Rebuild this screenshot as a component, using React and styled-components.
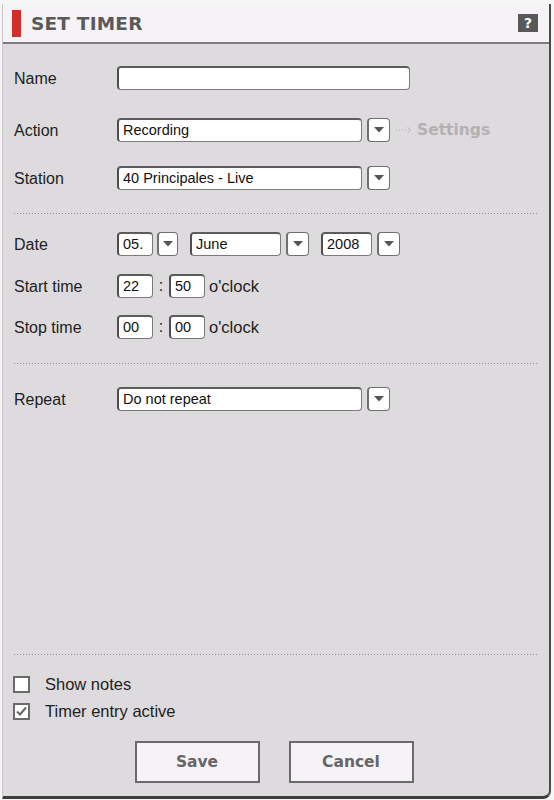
import React from "react";
import styled, { createGlobalStyle } from "styled-components";

const GlobalStyle = createGlobalStyle`
  body {
    margin: 0;
    background: #f7f6f7;
    font-family: "Liberation Sans", Arial, sans-serif;
  }
`;

function App() {
  return (
    <>
      <GlobalStyle />
      <Window>
        <Header>
          <RedBar />
          <Title>SET TIMER</Title>
          <HelpButton>?</HelpButton>
        </Header>
        <Body>
          <Row gap={28}>
            <Label>Name</Label>
            <Field>
              <Input width={293} />
            </Field>
          </Row>
          <Row gap={24}>
            <Label>Action</Label>
            <Field>
              <Input width={245}>Recording</Input>
              <DropButton />
              <SettingsLink>
                <svg width="17" height="8" viewBox="0 0 17 8">
                  <g fill="#b3b1b3">
                    <rect x="0" y="3.5" width="1" height="1" />
                    <rect x="3" y="3.5" width="1" height="1" />
                    <rect x="6" y="3.5" width="1" height="1" />
                    <rect x="9" y="3.5" width="1" height="1" />
                  </g>
                  <path d="M11.5 1 L14.5 4 L11.5 7" fill="none" stroke="#b3b1b3" strokeWidth="1" />
                </svg>
                Settings
              </SettingsLink>
            </Field>
          </Row>
          <Row gap={23}>
            <Label>Station</Label>
            <Field>
              <Input width={245}>40 Principales - Live</Input>
              <DropButton />
            </Field>
          </Row>
          <Divider after={18} />
          <Row gap={18}>
            <Label>Date</Label>
            <Field>
              <Input width={36}>05.</Input>
              <DropButton narrow />
              <Spacer />
              <Input width={91}>June</Input>
              <DropButton />
              <Spacer />
              <Input width={51}>2008</Input>
              <DropButton />
            </Field>
          </Row>
          <Row gap={17}>
            <Label>Start time</Label>
            <Field>
              <Input width={36}>22</Input>
              <Colon>:</Colon>
              <Input width={36}>50</Input>
              <Unit>o'clock</Unit>
            </Field>
          </Row>
          <Row gap={24}>
            <Label>Stop time</Label>
            <Field>
              <Input width={36}>00</Input>
              <Colon>:</Colon>
              <Input width={36}>00</Input>
              <Unit>o'clock</Unit>
            </Field>
          </Row>
          <Divider after={23} />
          <Row gap={0}>
            <Label>Repeat</Label>
            <Field>
              <Input width={245}>Do not repeat</Input>
              <DropButton />
            </Field>
          </Row>

          <Footer>
            <Divider after={21} />
            <CheckRow>
              <CheckBox />
              <CheckLabel>Show notes</CheckLabel>
            </CheckRow>
            <CheckRow>
              <CheckBox>
                <svg width="13" height="13" viewBox="0 0 13 13">
                  <path d="M2 6.5 L5 9.5 L11 2.5" fill="none" stroke="#666" strokeWidth="2" />
                </svg>
              </CheckBox>
              <CheckLabel>Timer entry active</CheckLabel>
            </CheckRow>
            <Buttons>
              <Button>Save</Button>
              <Button>Cancel</Button>
            </Buttons>
          </Footer>
        </Body>
      </Window>
    </>
  );
}

function DropButton({ narrow }) {
  return (
    <Drop narrow={narrow}>
      <svg width="10" height="6" viewBox="0 0 10 6">
        <path d="M0 0 L10 0 L5 5.5 Z" fill="#555" />
      </svg>
    </Drop>
  );
}

const Window = styled.div`
  box-sizing: border-box;
  width: 549px;
  height: 795px;
  margin: 4px 0 0 2px;
  display: flex;
  flex-direction: column;
  background: #dddbdd;
  border-left: 1px solid #c9c7c9;
  border-right: 2px solid #4a4a4a;
  border-bottom: 3px solid #3e3e3e;
  border-bottom-right-radius: 8px;
  overflow: hidden;
`;

const Header = styled.div`
  height: 38px;
  flex-shrink: 0;
  display: flex;
  align-items: center;
  padding: 0 11px 0 9px;
  background: #f6f3f6;
  border-bottom: 2px solid #7c7a7c;
`;

const RedBar = styled.div`
  width: 9px;
  height: 27px;
  background: #d42b2b;
`;

const Title = styled.div`
  margin-left: 10px;
  font-family: "DejaVu Sans", Verdana, sans-serif;
  font-weight: bold;
  font-size: 18.5px;
  letter-spacing: 0.2px;
  color: #5a5a5a;
`;

const HelpButton = styled.div`
  margin-left: auto;
  width: 20px;
  height: 18px;
  background: #585858;
  color: #fff;
  font-family: "DejaVu Sans", Verdana, sans-serif;
  font-weight: bold;
  font-size: 14px;
  line-height: 18px;
  text-align: center;
`;

const Body = styled.div`
  flex: 1;
  display: flex;
  flex-direction: column;
  padding: 22px 10px 13px 11px;
`;

const Row = styled.div`
  display: grid;
  grid-template-columns: 103px auto;
  align-items: center;
  margin-bottom: ${(p) => p.gap}px;
`;

const Label = styled.div`
  font-size: 16px;
  color: #1e1e1e;
  padding-top: 2px;
`;

const Field = styled.div`
  display: flex;
  align-items: center;
`;

const Input = styled.div`
  box-sizing: border-box;
  width: ${(p) => p.width}px;
  height: 24px;
  padding-left: 4px;
  background: #fff;
  border: 1px solid #7a7a7a;
  border-left: 2px solid #4e4e4e;
  border-top: 2px solid #5c5c5c;
  border-radius: 4px;
  font-size: 14.5px;
  line-height: 20px;
  color: #111;
  white-space: nowrap;
  overflow: hidden;
`;

const Drop = styled.div`
  box-sizing: border-box;
  width: ${(p) => (p.narrow ? 21 : 23)}px;
  height: 24px;
  margin-left: ${(p) => (p.narrow ? 4 : 5)}px;
  display: flex;
  align-items: center;
  justify-content: center;
  background: #fff;
  border: 1px solid #707070;
  border-left-width: 2px;
  border-radius: 4px;
`;

const Spacer = styled.div`
  width: 12px;
`;

const SettingsLink = styled.div`
  display: flex;
  align-items: center;
  gap: 4px;
  margin-left: 6px;
  font-family: "DejaVu Sans", Verdana, sans-serif;
  font-weight: bold;
  font-size: 15.5px;
  color: #b3b1b3;
`;

const Colon = styled.div`
  width: 16px;
  text-align: center;
  font-size: 16px;
  color: #1e1e1e;
`;

const Unit = styled.div`
  margin-left: 4px;
  font-size: 16.5px;
  color: #1e1e1e;
`;

const Divider = styled.div`
  height: 1px;
  margin-bottom: ${(p) => p.after}px;
  background: repeating-linear-gradient(to right, #8e8c8e 0 1px, transparent 1px 3px);
`;

const Footer = styled.div`
  margin-top: auto;
  display: flex;
  flex-direction: column;
`;

const CheckRow = styled.div`
  height: 17px;
  display: flex;
  align-items: center;
  margin-bottom: 10px;
  margin-left: -1px;
`;

const CheckBox = styled.div`
  box-sizing: border-box;
  width: 17px;
  height: 17px;
  background: #fff;
  border: 2px solid #6a6a6a;
  display: flex;
  align-items: center;
  justify-content: center;
`;

const CheckLabel = styled.div`
  margin-left: 15px;
  font-size: 16.5px;
  color: #1e1e1e;
`;

const Buttons = styled.div`
  display: flex;
  justify-content: center;
  gap: 29px;
  margin-top: 11px;
  padding-right: 5px;
`;

const Button = styled.div`
  box-sizing: border-box;
  width: 125px;
  height: 42px;
  display: flex;
  align-items: center;
  justify-content: center;
  background: #f6f3f6;
  border: 2px solid #6a6a6a;
  font-family: "DejaVu Sans", Verdana, sans-serif;
  font-weight: bold;
  font-size: 15.5px;
  color: #666;
`;

export default App;
